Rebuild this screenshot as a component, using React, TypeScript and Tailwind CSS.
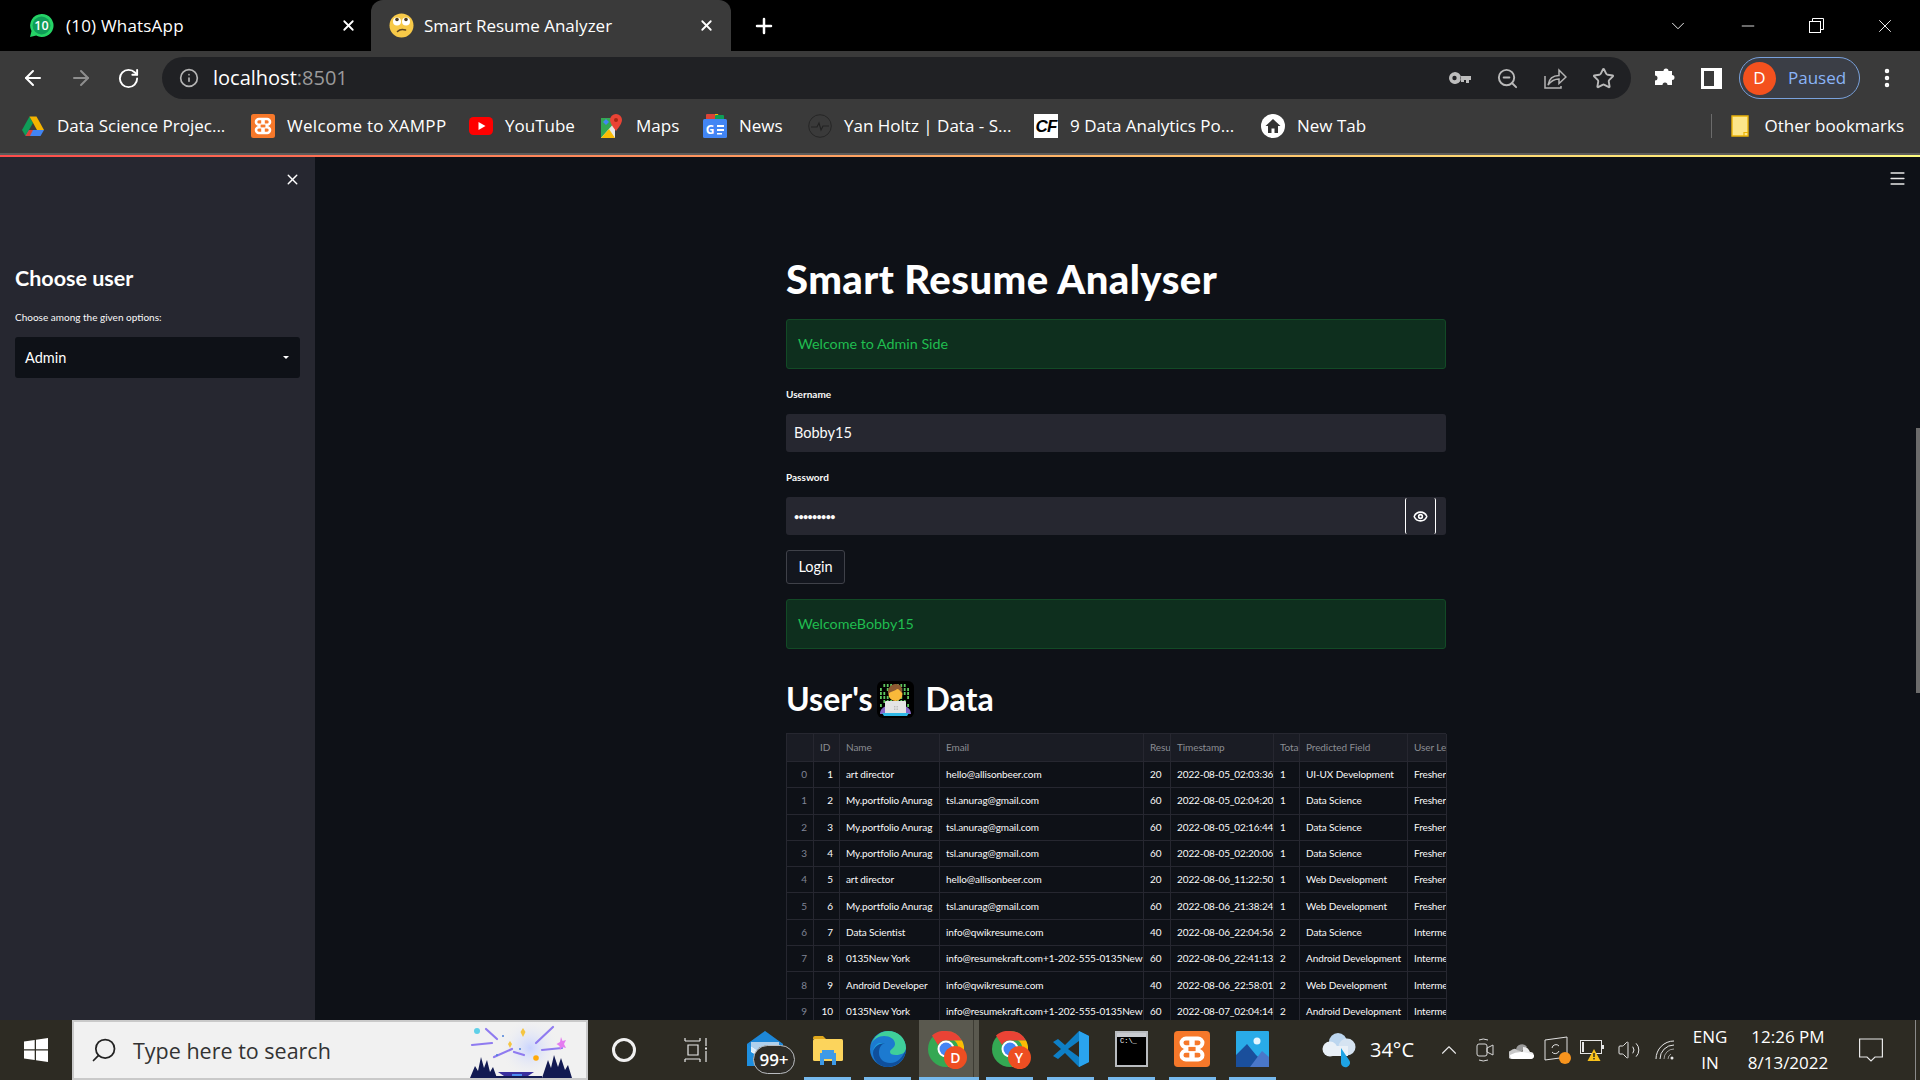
import React from "react";
import { ArrowLeft, ArrowRight, RotateCw, Info, Plus, X, ChevronDown, Minus, Search, ZoomOut, Star, Eye, Menu, MoreVertical, ChevronUp, Volume2 } from "lucide-react";

const ui = "font-['Open_Sans',sans-serif]";

function WhatsApp() {
  return (
    <svg width="25" height="25" viewBox="0 0 25 25">
      <path d="M12.5 1a11.5 11.5 0 0 0-10 17L1 24l6.2-1.6A11.5 11.5 0 1 0 12.5 1z" fill="#25d366" />
      <circle cx="12.5" cy="12.5" r="9" fill="#0f9d58" />
      <text x="12.5" y="17" textAnchor="middle" fontSize="12.5" fontWeight="600" fill="#fff" fontFamily="Open Sans">10</text>
    </svg>
  );
}
function RollFace() {
  return (
    <svg width="25" height="25" viewBox="0 0 25 25">
      <circle cx="12.5" cy="12.5" r="12" fill="#f7c948" />
      <circle cx="8" cy="8.5" r="4" fill="#fff" />
      <circle cx="17" cy="8.5" r="4" fill="#fff" />
      <circle cx="8" cy="6.5" r="1.8" fill="#4a3a20" />
      <circle cx="17" cy="6.5" r="1.8" fill="#4a3a20" />
      <path d="M8.5 18.5c2-2 5-2.4 8-1.5" stroke="#5d4520" strokeWidth="1.6" fill="none" strokeLinecap="round" />
    </svg>
  );
}
function Drive() {
  return (
    <svg width="22" height="22" viewBox="0 0 22 22">
      <path d="M7.5 1.5 0 15l3.5 6L11 8z" fill="#0f9d58" />
      <path d="M7.5 1.5h7L22 15h-7z" fill="#f4b400" />
      <path d="M3.5 21h15l3.5-6H7z" fill="#4285f4" />
      <path d="M3.5 21 7 15h4l-3 6z" fill="#db4437" />
    </svg>
  );
}
function Xampp({ size = 24 }: { size?: number }) {
  return (
    <svg width={size} height={size} viewBox="0 0 24 24">
      <rect width="24" height="24" rx="2.5" fill="#f6782a" />
      <g fill="none" stroke="#fff" strokeWidth="2.6">
        <rect x="5" y="5" width="14" height="5.8" rx="2.9" />
        <rect x="5" y="13.2" width="14" height="5.8" rx="2.9" />
      </g>
      <rect x="10.2" y="4" width="3.6" height="16" fill="#fff" />
      <rect x="9.6" y="10.6" width="4.8" height="2.8" fill="#f6782a" />
    </svg>
  );
}
function YouTube() {
  return (
    <svg width="24" height="18" viewBox="0 0 24 18">
      <rect width="24" height="18" rx="4.5" fill="#f00" />
      <path d="M9.5 5v8l7-4z" fill="#fff" />
    </svg>
  );
}
function Maps() {
  return (
    <svg width="22" height="24" viewBox="0 0 22 24">
      <path d="M0 4h14v20H0z" fill="#34a853" />
      <path d="M0 24 14 8v16z" fill="#e8e8e8" />
      <path d="M0 24 8 15l6 9z" fill="#fbbc04" />
      <path d="M2 8l3-3 3 3-3 3z" fill="#4285f4" />
      <path d="M15 0a6 6 0 0 0-6 6c0 4 6 11 6 11s6-7 6-11a6 6 0 0 0-6-6z" fill="#ea4335" />
      <circle cx="15" cy="6" r="2" fill="#a52714" />
    </svg>
  );
}
function News() {
  return (
    <svg width="24" height="24" viewBox="0 0 24 24">
      <path d="M4 3h7l1-3h3l1 3h4v6H4z" fill="#f4b400" />
      <rect x="3" y="0" width="9" height="6" rx="1" fill="#db4437" />
      <rect x="12" y="1" width="9" height="6" rx="1" fill="#0f9d58" />
      <rect x="0" y="5" width="24" height="19" rx="1.5" fill="#4285f4" />
      <text x="7" y="20" textAnchor="middle" fontSize="12" fontWeight="700" fill="#fff" fontFamily="Open Sans">G</text>
      <path d="M14 11h7v2h-7zM14 15h7v2h-7zM14 19h5v1.6h-5z" fill="#fff" />
    </svg>
  );
}
function Pulse() {
  return (
    <svg width="24" height="24" viewBox="0 0 24 24" fill="none" stroke="#262626" strokeWidth="1">
      <circle cx="12" cy="12" r="11.3" />
      <path d="M3 13h6l2-4 2 7 2-4h6" stroke="#222" strokeWidth="1.1" />
    </svg>
  );
}
function CF() {
  return (
    <div className="w-[24px] h-[24px] bg-white flex items-center justify-center">
      <span className="text-black font-bold italic text-[17px] leading-none tracking-tighter font-['Liberation_Sans',sans-serif]">CF</span>
    </div>
  );
}
function Home() {
  return (
    <svg width="24" height="24" viewBox="0 0 24 24">
      <circle cx="12" cy="12" r="12" fill="#fff" />
      <path d="M12 5 4.5 12H7v7h3.5v-4.5h3V19H17v-7h2.5z" fill="#333" />
    </svg>
  );
}
function Folder() {
  return (
    <svg width="18" height="22" viewBox="0 0 18 22">
      <path d="M1 1h16v20H1z" fill="#fde68a" stroke="#eab308" strokeWidth="1.4" />
      <path d="M13 21v-3.5h4" fill="none" stroke="#eab308" strokeWidth="1.2" />
    </svg>
  );
}
function Key() {
  return (
    <svg width="22" height="12" viewBox="0 0 22 12">
      <path d="M6 0a6 6 0 1 1-5.6 8h0A6 6 0 0 1 6 0zm5.5 4H22v4h-2v3h-3V8h-2v2h-3V8h-.5z" fill="#bdbdbd" fillRule="evenodd" />
      <circle cx="5.5" cy="6" r="2.2" fill="#202124" />
    </svg>
  );
}
function Share() {
  return (
    <svg width="23" height="22" viewBox="0 0 23 22" fill="none" stroke="#b4b4b4" strokeWidth="1.5">
      <path d="M1 9v12h16v-2" />
      <path d="M4 18c1-6 5-9.500 11-9.500V3l7 7-7 6.500v-4.500c-5 0-8 2-11 6z" />
    </svg>
  );
}
function Puzzle() {
  return (
    <svg width="22" height="22" viewBox="0 0 22 22">
      <path d="M6 4h3.500a2.500 2.500 0 1 1 5 0H18v4a2.500 2.500 0 1 1 0 5v5h-4.500a2.500 2.500 0 1 0-5 0H1v-4.500a2.500 2.500 0 1 0 0-5V4z" fill="#fff" />
    </svg>
  );
}
function SidePanel() {
  return (
    <svg width="21" height="21" viewBox="0 0 21 21">
      <rect width="21" height="21" fill="#fff" />
      <rect x="3" y="3" width="10" height="15" fill="#3a3a3a" />
    </svg>
  );
}
function Restore() {
  return (
    <svg width="15" height="15" viewBox="0 0 15 15" fill="none" stroke="#fff" strokeWidth="1">
      <rect x="0.500" y="3.500" width="11" height="11" />
      <path d="M3.500 3.500v-3h11v11h-3" />
    </svg>
  );
}
function WinLogo() {
  return (
    <svg width="24" height="24" viewBox="0 0 24 24" fill="#fff">
      <path d="M0 3.500 10.700 2v9.300H0zM12 1.800 24 0v11.300H12zM0 12.600h10.700V22L0 20.500zM12 12.600h12V24l-12-1.800z" />
    </svg>
  );
}
function SearchArt() {
  return (
    <svg width="116" height="56" viewBox="0 0 116 56">
      <defs>
        <radialGradient id="glow" cx="50%" cy="50%" r="50%">
          <stop offset="0%" stopColor="#c9d4ff" />
          <stop offset="100%" stopColor="#f1f1f1" stopOpacity="0" />
        </radialGradient>
      </defs>
      <circle cx="60" cy="26" r="30" fill="url(#glow)" />
      <g stroke="#8f7bf0" strokeWidth="2.2" strokeLinecap="round" fill="none">
        <path d="M16 7 27 17" />
        <path d="M83 5 66 21" />
        <path d="M2 23 22 21" />
        <path d="M72 28 92 26" />
        <path d="M24 35 42 27" />
        <path d="M44 30 54 33" />
      </g>
      <path d="M53 6l2.500 4-2.500 5-2.500-5z" fill="#f5c542" />
      <path d="M40 19l2 3-2 4-2-4z" fill="#f5c542" />
      <path d="M91 15l1.500 4 3.500-1-2 4 2 4-4-1-2 3-.5-4-3-2 3.500-2z" fill="#e57cf0" />
      <circle cx="7" cy="9" r="3" fill="#5fd0e8" />
      <circle cx="66" cy="36" r="2.800" fill="#ffa90a" />
      <circle cx="27" cy="33" r="1" fill="#4a7fd8" />
      <circle cx="50" cy="27" r="1" fill="#4a7fd8" />
      <circle cx="33" cy="14" r="1" fill="#4a7fd8" />
      <path d="M0 56 5 44l3 5 3-14 3 11 3-8 3 12 3-5 4 11zM56 56 72 56 78 38l3 8 3-13 4 12 3-9 4 12 3-5 4 13 14 0z" fill="#121a52" />
      <path d="M28 50h36l-6 4H34z" fill="#3a2f9e" />
      <path d="M34 54h24l-6 2H40z" fill="#6aa0f5" />
      <rect x="42" y="52" width="10" height="4" fill="#4c8df0" />
      <path d="M24 56h48v-2H24z" fill="#121a52" />
    </svg>
  );
}
function Mail() {
  return (
    <div className="relative w-[36px] h-[40px]">
      <svg width="36" height="40" viewBox="0 0 36 40" className="absolute left-0 top-0">
        <path d="M18 1 36 14v22H0V14z" fill="#1e8fe0" />
        <path d="M4 12h28v10L18 30 4 22z" fill="#fff" />
        <path d="M18 1 36 14 18 26 0 14z" fill="#1c78c8" opacity=".35" />
        <path d="M4 17 18 26l14-9v4L18 30 4 21z" fill="#ddeefa" />
      </svg>
      <div className="absolute left-[6px] top-[15px] w-[42px] h-[29px] rounded-full border border-[#b9bcc0] bg-[#2e2c27] flex items-center justify-center text-white text-[17px] font-semibold leading-none">99+</div>
    </div>
  );
}
function FileExplorer() {
  return (
    <svg width="32" height="32" viewBox="0 0 32 32">
      <path d="M1 5a2 2 0 0 1 2-2h8l3 3h-13z" fill="#e0a81c" />
      <rect x="1" y="6" width="30" height="22" rx="1.5" fill="#fcd45c" />
      <path d="M10 17h12v3h2v12h-4v-6h-8v6H8V20h2z" fill="#3d9ae8" />
    </svg>
  );
}
function Edge() {
  return (
    <svg width="36" height="36" viewBox="0 0 36 36">
      <circle cx="18" cy="18" r="18" fill="#1c7ad0" />
      <path d="M1 14C4 5 11 0 18 0c10 0 18 7 18 17 0 5-5 7-10 7-4 0-6-1-6-3 0-3 5-4 5-8 0-5-5-8-11-8C9 5 3 8 1 14z" fill="#3fcf9a" />
      <path d="M36 18c0 9-8 18-18 18-9 0-15-7-15-14 0-6 6-10 12-10-5 2-6 6-6 10 0 6 5 10 11 10 8 0 13-6 16-14z" fill="#0f4f9c" />
      <path d="M15 12c-6 0-12 4-12 10 0-5 2-8 6-10z" fill="#1fa0dc" />
    </svg>
  );
}
function Chrome({ letter }: { letter: string }) {
  return (
    <div className="relative w-[36px] h-[36px]">
      <svg width="36" height="36" viewBox="0 0 36 36" className="absolute left-0 top-0">
        <circle cx="18" cy="18" r="18" fill="#34a853" />
        <path d="M18 0a18 18 0 0 1 16 9.500H18A8.500 8.500 0 0 0 10 14L4 4.500A18 18 0 0 1 18 0z" fill="#ea4335" />
        <path d="M34 9.500A18 18 0 0 1 20 36l6-12a8.500 8.500 0 0 0 0-14.500z" fill="#fbbc04" />
        <circle cx="18" cy="18" r="8.500" fill="#fff" />
        <circle cx="18" cy="18" r="6.500" fill="#4285f4" />
      </svg>
      <div className="absolute left-[16px] top-[15px] w-[23px] h-[23px] rounded-full bg-[#ee4e22] text-white text-[14px] leading-none flex items-center justify-center font-semibold">{letter}</div>
    </div>
  );
}
function VSCode() {
  return (
    <svg width="36" height="36" viewBox="0 0 36 36">
      <path d="M26 0 36 5v26l-10 5-14-14-7 6-5-3 8-7-8-7 5-3 7 6z" fill="#0e7fc6" />
      <path d="M26 0 36 5v26l-10 5z" fill="#2aa3ee" />
      <path d="M26 10 15 18l11 8z" fill="#2d2a22" />
    </svg>
  );
}
function Terminal() {
  return (
    <div className="w-[33px] h-[36px] border-2 border-[#b9bcc0] bg-black relative">
      <div className="h-[4px] bg-[#c9cbd0]" />
      <span className="absolute left-[3px] top-[5px] text-[7px] leading-none text-white font-['Liberation_Mono',monospace]">C:\_</span>
    </div>
  );
}
function Photos() {
  return (
    <svg width="33" height="36" viewBox="0 0 33 36">
      <rect width="33" height="36" rx="1" fill="#29abe8" />
      <circle cx="21" cy="10" r="3.500" fill="#e6f6ff" />
      <path d="M0 36V24L11 13l9 11 13 12z" fill="#1a4f9c" />
      <path d="M14 36l12-16 7 6v10z" fill="#4a77c9" />
    </svg>
  );
}
function Weather() {
  return (
    <svg width="34" height="36" viewBox="0 0 34 36">
      <circle cx="16" cy="10" r="9" fill="#bcd6ef" />
      <circle cx="8" cy="17" r="7.500" fill="#e9f0f7" />
      <circle cx="25" cy="15" r="8.500" fill="#d5e3f1" />
      <rect x="8" y="14" width="18" height="10" fill="#e9f0f7" />
      <path d="M19 16 27 28a4.500 4.500 0 1 1-8 3z" fill="#1ea3e4" />
    </svg>
  );
}
function Cam() {
  return (
    <svg width="18" height="26" viewBox="0 0 18 26" fill="none" stroke="#d8d8d8" strokeWidth="1">
      <rect x="1" y="7" width="10" height="12" rx="2" />
      <path d="M11 11 17 8v10l-6-3z" />
      <path d="M3 3q4-2 9 0M3 23q4 2 9 0" />
    </svg>
  );
}
function OneDrive() {
  return (
    <svg width="25" height="18" viewBox="0 0 25 18">
      <path d="M7 9a6 6 0 0 1 11-3l-6 5z" fill="#9a9a9a" />
      <path d="M2 9.500a4 4 0 0 1 6-.5l6 2-6 7H4a4 4 0 0 1-2-8.500z" fill="#c8c8c8" />
      <path d="M14 6c5 0 6 3 7 5a3.500 3.500 0 0 1 .500 7H6l8-8z" fill="#ededed" />
      <path d="M1 14q10-6 24 0v1q0 3-4 3H4q-3 0-3-4z" fill="#fff" />
    </svg>
  );
}
function SyncTray() {
  return (
    <div className="relative w-[26px] h-[28px]">
      <svg width="24" height="26" viewBox="0 0 24 26" fill="none" stroke="#e0e0e0" strokeWidth="1" className="absolute left-0 top-0">
        <path d="M1 4 23 1v20L1 24z" />
        <path d="M8 12a4 4 0 0 1 7-2M15 15a4 4 0 0 1-7 1" />
      </svg>
      <div className="absolute right-[-1px] bottom-0 w-[12px] h-[12px] rounded-full bg-[#f7941d]" />
    </div>
  );
}
function BatteryWarn() {
  return (
    <svg width="26" height="24" viewBox="0 0 26 24">
      <rect x="0.500" y="2.500" width="21" height="13" fill="none" stroke="#e6e6e6" />
      <rect x="2" y="4" width="2" height="10" fill="#e6e6e6" />
      <rect x="22" y="7" width="2" height="4" fill="#e6e6e6" />
      <path d="M14 11 20.500 23H7.500z" fill="#f8c21c" />
      <rect x="13.300" y="15" width="1.400" height="4" fill="#222" />
      <rect x="13.300" y="20" width="1.400" height="1.400" fill="#222" />
    </svg>
  );
}
function WifiArcs() {
  return (
    <svg width="20" height="20" viewBox="0 0 20 20" fill="none" stroke="#e8e8e8" strokeWidth="1">
      <path d="M1 19A18 18 0 0 1 19 1" />
      <path d="M5 19A14 14 0 0 1 19 5" />
      <path d="M9 19A10 10 0 0 1 19 9" opacity=".6" />
      <path d="M13 19a6 6 0 0 1 3-5" opacity=".6" />
      <circle cx="17" cy="18" r="1.500" fill="#e8e8e8" stroke="none" />
    </svg>
  );
}
function NotifIcon() {
  return (
    <svg width="24" height="24" viewBox="0 0 24 24" fill="none" stroke="#e8e8e8" strokeWidth="1.2">
      <path d="M.6 1h22.800v18H16l-4 4-4-4H.6z" />
    </svg>
  );
}
function TaskView() {
  return (
    <svg width="24" height="24" viewBox="0 0 24 24" fill="none" stroke="#e8e8e8" strokeWidth="1.2">
      <path d="M1 3h15M1 21h15M4 7h10v10H4z" />
      <path d="M1 0v3M16 0v3M1 21v3M16 21v3" />
      <path d="M22 0v8M22 13v11" strokeWidth="1.2" />
      <rect x="21" y="9.500" width="2" height="2" fill="#e8e8e8" stroke="none" />
    </svg>
  );
}
function Technologist() {
  const bits = [];
  for (let r = 0; r < 6; r++) {
    for (let c = 0; c < 9; c++) {
      if ((r * 3 + c * 5) % 4 !== 0) bits.push(<rect key={`${r}-${c}`} x={3 + c * 3.400} y={3 + r * 4} width="1.800" height="3" fill="#5fc75f" />);
    }
  }
  return (
    <svg width="37" height="37" viewBox="0 0 37 37">
      <rect width="37" height="37" rx="6" fill="#000" />
      {bits}
      <circle cx="18.500" cy="13" r="7" fill="#f9b93a" />
      <path d="M11 13c-1-9 6-10 8-10 4 0 7 3 6 9-2-2-3-4-5-4-2 2-6 2-9 5z" fill="#8d5a32" />
      <path d="M11 22c3-2 12-2 15 0v8H11z" fill="#f3f3f3" />
      <path d="M3 33c0-5 4-8 8-8l2 8zM34 33c0-5-4-8-8-8l-2 8z" fill="#8667c9" />
      <rect x="8" y="20" width="21" height="14" rx="1" fill="#e4e4e4" />
      <rect x="17" y="25" width="1.400" height="1.400" fill="#bbb" />
      <rect x="19.500" y="25" width="1.400" height="1.400" fill="#bbb" />
      <rect x="17" y="27.500" width="1.400" height="1.400" fill="#bbb" />
      <rect x="19.500" y="27.500" width="1.400" height="1.400" fill="#bbb" />
      <path d="M5 32h27l-2 3H7z" fill="#2fb8e6" />
    </svg>
  );
}

const bookmarks: { label: string; icon: React.ReactNode; w: string; t?: string }[] = [
  { label: "Data Science Projec...", icon: <Drive />, w: "w-[230px]" },
  { label: "Welcome to XAMPP", icon: <Xampp />, w: "w-[218px]", t: "tracking-[0.3px]" },
  { label: "YouTube", icon: <YouTube />, w: "w-[131px]" },
  { label: "Maps", icon: <Maps />, w: "w-[103px]" },
  { label: "News", icon: <News />, w: "w-[105px]" },
  { label: "Yan Holtz | Data - S...", icon: <Pulse />, w: "w-[226px]" },
  { label: "9 Data Analytics Po...", icon: <CF />, w: "w-[227px]" },
  { label: "New Tab", icon: <Home />, w: "w-[110px]" },
];

const rows = [
  ["0", "1", "art director", "hello@allisonbeer.com", "20", "2022-08-05_02:03:36", "1", "UI-UX Development", "Fresher"],
  ["1", "2", "My.portfolio Anurag", "tsl.anurag@gmail.com", "60", "2022-08-05_02:04:20", "1", "Data Science", "Fresher"],
  ["2", "3", "My.portfolio Anurag", "tsl.anurag@gmail.com", "60", "2022-08-05_02:16:44", "1", "Data Science", "Fresher"],
  ["3", "4", "My.portfolio Anurag", "tsl.anurag@gmail.com", "60", "2022-08-05_02:20:06", "1", "Data Science", "Fresher"],
  ["4", "5", "art director", "hello@allisonbeer.com", "20", "2022-08-06_11:22:50", "1", "Web Development", "Fresher"],
  ["5", "6", "My.portfolio Anurag", "tsl.anurag@gmail.com", "60", "2022-08-06_21:38:24", "1", "Web Development", "Fresher"],
  ["6", "7", "Data Scientist", "info@qwikresume.com", "40", "2022-08-06_22:04:56", "2", "Data Science", "Intermediate"],
  ["7", "8", "0135New York", "info@resumekraft.com+1-202-555-0135New", "60", "2022-08-06_22:41:13", "2", "Android Development", "Intermediate"],
  ["8", "9", "Android Developer", "info@qwikresume.com", "40", "2022-08-06_22:58:01", "2", "Web Development", "Intermediate"],
  ["9", "10", "0135New York", "info@resumekraft.com+1-202-555-0135New", "60", "2022-08-07_02:04:14", "2", "Android Development", "Intermediate"],
];
const headers = ["", "ID", "Name", "Email", "Resume Score", "Timestamp", "Total Page", "Predicted Field", "User Level"];

function Table() {
  return (
    <div className="mt-[14px] w-[660px] grid grid-cols-[27px_26px_100px_204px_27px_103px_26px_108px_39px] grid-rows-[28px] auto-rows-[26.3px] border-t border-l border-[#262730] text-[10px] tracking-[-0.1px] shrink-0">
      {headers.map((h, i) => (
        <div key={i} className="bg-[#1a1c24] text-[#8b8d93] border-r border-b border-[#262730] flex items-center px-[6px] overflow-hidden whitespace-nowrap">{h}</div>
      ))}
      {rows.map((r, ri) =>
        r.map((c, ci) => (
          <div
            key={`${ri}-${ci}`}
            className={
              "border-r border-b border-[#262730] flex items-center overflow-hidden whitespace-nowrap px-[6px] " +
              (ci === 0 ? "justify-end text-[#808495] " : ci === 1 ? "justify-end text-[#fafafa] " : "text-[#fafafa] ")
            }
          >
            {c}
          </div>
        ))
      )}
    </div>
  );
}

function Success({ text, cls }: { text: string; cls: string }) {
  return (
    <div className={"w-[660px] h-[50px] shrink-0 rounded-[3px] bg-[#0e2f1e] border border-[#124a26] flex items-center pl-[11px] text-[#20bd50] text-[14.300px] " + cls}>{text}</div>
  );
}

function Pin({ w, children, bar, active }: { w: string; children: React.ReactNode; bar?: string; active?: boolean }) {
  return (
    <div className={w + " h-full relative flex items-center justify-center " + (active ? "bg-[#5a594f] pr-[6px] " : "")}>
      <div className="-mt-[2px]">{children}</div>
      {active && <div className="absolute right-[5px] top-0 bottom-0 w-[1px] bg-[#3d3c34]" />}
      {bar && <div className={"absolute bottom-0 h-[3px] bg-[#76b9ed] " + bar} />}
    </div>
  );
}

export default function App() {
  return (
    <div className={"w-[1920px] h-[1080px] overflow-hidden flex flex-col bg-[#0e1117] " + ui}>
      {/* Tab strip */}
      <div className="h-[51px] shrink-0 bg-black flex text-white text-[17px]">
        <div className="w-[371px] flex items-center pl-[29px]">
          <WhatsApp />
          <span className="ml-[12px] whitespace-nowrap tracking-[0.2px]">(10) WhatsApp</span>
          <X className="ml-auto mr-[14px]" size={17} strokeWidth={2.5} />
        </div>
        <div className="w-[360px] bg-[#3a3a3a] rounded-t-[12px] flex items-center pl-[18px]">
          <RollFace />
          <span className="ml-[10px] whitespace-nowrap">Smart Resume Analyzer</span>
          <X className="ml-auto mr-[16px]" size={17} strokeWidth={2.5} />
        </div>
        <div className="ml-[21px] flex items-center"><Plus size={24} strokeWidth={2.5} /></div>
        <div className="ml-auto flex items-center">
          <ChevronDown size={22} strokeWidth={1} className="mr-[49px]" />
          <Minus size={20} strokeWidth={1} className="mr-[51px]" />
          <Restore />
          <X size={22} strokeWidth={1} className="ml-[50px] mr-[24px]" />
        </div>
      </div>
      {/* Toolbar */}
      <div className="h-[48px] shrink-0 bg-[#3a3a3a] flex items-start">
        <div className="flex items-center h-full w-[162px] pl-[21px] gap-[24px] mt-[3px]">
          <ArrowLeft size={24} color="#fff" strokeWidth={2} />
          <ArrowRight size={24} color="#8e8e8e" strokeWidth={2} />
          <RotateCw size={23} color="#fff" strokeWidth={2} />
        </div>
        <div className="mt-[6px] h-[42px] w-[1469px] rounded-full bg-[#202124] flex items-center pl-[17px] pr-[16px]">
          <Info size={20} color="#b4b4b4" />
          <span className="ml-[14px] text-[20px] text-white">localhost<span className="text-[#9a9a9a]">:8501</span></span>
          <div className="ml-auto flex items-center gap-[25px]">
            <Key />
            <ZoomOut size={23} color="#b9b9b9" />
            <Share />
            <Star size={23} color="#b9b9b9" strokeWidth={2} />
          </div>
        </div>
        <div className="flex-1 flex items-center h-full mt-[3px]">
          <div className="ml-[23px]"><Puzzle /></div>
          <div className="ml-[25px]"><SidePanel /></div>
          <div className="ml-[17px] w-[121px] h-[42px] rounded-full border border-[#79a1dc] bg-[#3b3e46] flex items-center pl-[3px]">
            <div className="w-[33px] h-[33px] rounded-full bg-[#f4511e] text-white text-[17px] flex items-center justify-center">D</div>
            <span className="ml-[12px] text-[#8ab4f8] text-[17px]">Paused</span>
          </div>
          <MoreVertical className="ml-[15px]" size={24} color="#fff" strokeWidth={2.5} />
        </div>
      </div>
      {/* Bookmarks */}
      <div className="h-[54px] shrink-0 bg-[#3a3a3a] flex items-center pl-[21px] text-white text-[17px]">
        {bookmarks.map((b) => (
          <div key={b.label} className={b.w + " flex items-center gap-[12px] shrink-0"}>
            <div className="w-[24px] h-[24px] flex items-center justify-center shrink-0">{b.icon}</div>
            <span className={"whitespace-nowrap " + (b.t ?? "")}>{b.label}</span>
          </div>
        ))}
        <div className="ml-auto h-[24px] border-l border-[#6b6b6b] flex items-center pl-[19px] pr-[16px]">
          <Folder />
          <span className="ml-[15px] whitespace-nowrap">Other bookmarks</span>
        </div>
      </div>
      <div className="h-[2px] shrink-0 bg-[#5c5c5c]" />
      <div className="h-[2px] shrink-0 bg-gradient-to-r from-[#ff4b4b] to-[#fffd80]" />
      {/* Streamlit body */}
      <div className="flex-1 min-h-0 flex font-['Lato',sans-serif] text-[#fafafa]">
        <aside className="w-[315px] shrink-0 bg-[#262730] px-[15px] relative">
          <X size={17} color="#fff" strokeWidth={2} className="absolute left-[284px] top-[14px]" />
          <h2 className="mt-[106px] text-[21.500px] font-bold leading-[30px] text-white">Choose user</h2>
          <div className="mt-[17px] text-[10px] leading-[14px] text-[#fafafa]">Choose among the given options:</div>
          <div className="mt-[13px] w-[285px] h-[41px] rounded-[3px] bg-[#0e1117] flex items-center pl-[10px] pr-[11px] text-[14.500px] text-white">
            Admin
            <span className="ml-auto w-0 h-0 border-l-[3px] border-r-[3px] border-t-[3px] border-l-transparent border-r-transparent border-t-white" />
          </div>
        </aside>
        <main className="flex-1 min-w-0 relative overflow-hidden pl-[471px]">
          <div className="w-[660px] flex flex-col">
            <h1 className="mt-[97px] h-[50px] text-[40px] font-black tracking-[0.450px] leading-[50px] text-white whitespace-nowrap">Smart Resume Analyser</h1>
            <Success text="Welcome to Admin Side" cls="mt-[15px]" />
            <label className="mt-[19px] h-[12px] text-[10px] leading-[12px] font-bold text-[#fafafa]">Username</label>
            <div className="mt-[14px] h-[38px] rounded-[3px] bg-[#262730] flex items-center pl-[8px] text-[14.500px] text-[#fafafa]">Bobby15</div>
            <label className="mt-[19px] h-[12px] text-[10px] leading-[12px] font-bold text-[#fafafa]">Password</label>
            <div className="mt-[14px] h-[38px] rounded-[3px] bg-[#262730] flex items-center pl-[8px] pr-[10px] text-[#fafafa]">
              <span className="text-[9px] font-bold tracking-[-0.700px] leading-none">•••••••••</span>
              <div className="ml-auto h-[36px] w-[31px] flex items-center justify-center border-l border-r border-white rounded-[2px]">
                <Eye size={15} color="#fff" strokeWidth={2.5} />
              </div>
            </div>
            <button className="mt-[15px] w-[59px] h-[34px] rounded-[3px] border border-[#3f4149] bg-[#13161e] text-[14.500px] text-white">Login</button>
            <Success text="WelcomeBobby15" cls="mt-[15px]" />
            <h2 className="mt-[30px] h-[40px] flex items-center text-[32px] font-bold text-white leading-none">
              User's
              <span className="ml-[4px] mr-[12px] shrink-0"><Technologist /></span>
              Data
            </h2>
            <Table />
          </div>
          <Menu size={19} color="#e8e8e8" strokeWidth={2} className="absolute right-[13px] top-[12px]" />
          <div className="absolute right-0 top-[271px] w-[4px] h-[265px] bg-[#6b6b6b]" />
        </main>
      </div>
      {/* Taskbar */}
      <div className="h-[60px] shrink-0 bg-[#2d2b23] flex items-center text-white">
        <div className="w-[72px] h-full flex items-center justify-center"><WinLogo /></div>
        <div className="w-[516px] h-full bg-[#f1f1f1] border-2 border-[#c9c9c9] flex items-center pl-[16px] overflow-hidden">
          <Search size={28} color="#222" strokeWidth={1.5} className="-scale-x-100" />
          <span className="ml-[15px] mt-[3px] text-[21.500px] text-[#333] whitespace-nowrap">Type here to search</span>
          <div className="ml-auto"><SearchArt /></div>
        </div>
        <div className="w-[72px] h-full flex items-center justify-center">
          <div className="w-[24px] h-[24px] rounded-full border-[3px] border-[#f0f0f0]" />
        </div>
        <div className="w-[72px] h-full flex items-center justify-center"><TaskView /></div>
        <div className="w-[66px] h-full flex items-center pl-[15px]"><Mail /></div>
        <Pin w="w-[59px]" bar="left-[6px] w-[47px]"><FileExplorer /></Pin>
        <Pin w="w-[62px]" bar="left-[7px] w-[47px]"><Edge /></Pin>
        <Pin w="w-[60px]" bar="left-0 w-[60px]" active><Chrome letter="D" /></Pin>
        <Pin w="w-[61px]" bar="left-[7px] w-[47px]"><Chrome letter="Y" /></Pin>
        <Pin w="w-[61px]" bar="left-[7px] w-[47px]"><VSCode /></Pin>
        <Pin w="w-[61px]" bar="left-[7px] w-[47px]"><Terminal /></Pin>
        <Pin w="w-[60px]" bar="left-[7px] w-[47px]"><Xampp size={36} /></Pin>
        <Pin w="w-[61px]" bar="left-[7px] w-[47px]"><Photos /></Pin>
        <div className="ml-[39px]"><Weather /></div>
        <span className="ml-[14px] w-[61px] text-[20px] whitespace-nowrap">34°C</span>
        <div className="w-[36px] flex justify-center"><ChevronUp size={26} strokeWidth={1} color="#e8e8e8" /></div>
        <div className="w-[36px] flex justify-center"><Cam /></div>
        <div className="w-[36px] flex justify-center"><OneDrive /></div>
        <div className="w-[36px] flex justify-center"><SyncTray /></div>
        <div className="w-[36px] flex justify-center"><BatteryWarn /></div>
        <div className="w-[36px] flex justify-center"><Volume2 size={24} strokeWidth={1} color="#e8e8e8" /></div>
        <div className="w-[36px] flex justify-center"><WifiArcs /></div>
        <div className="w-[54px] text-center text-[17px] leading-[26px]"><div>ENG</div><div>IN</div></div>
        <div className="w-[102px] text-center text-[17px] leading-[26px] whitespace-nowrap"><div>12:26 PM</div><div>8/13/2022</div></div>
        <div className="w-[64px] flex justify-center"><NotifIcon /></div>
        <div className="ml-auto h-full w-[1px] bg-[#8a8a8a] mr-[4px]" />
      </div>
    </div>
  );
}
